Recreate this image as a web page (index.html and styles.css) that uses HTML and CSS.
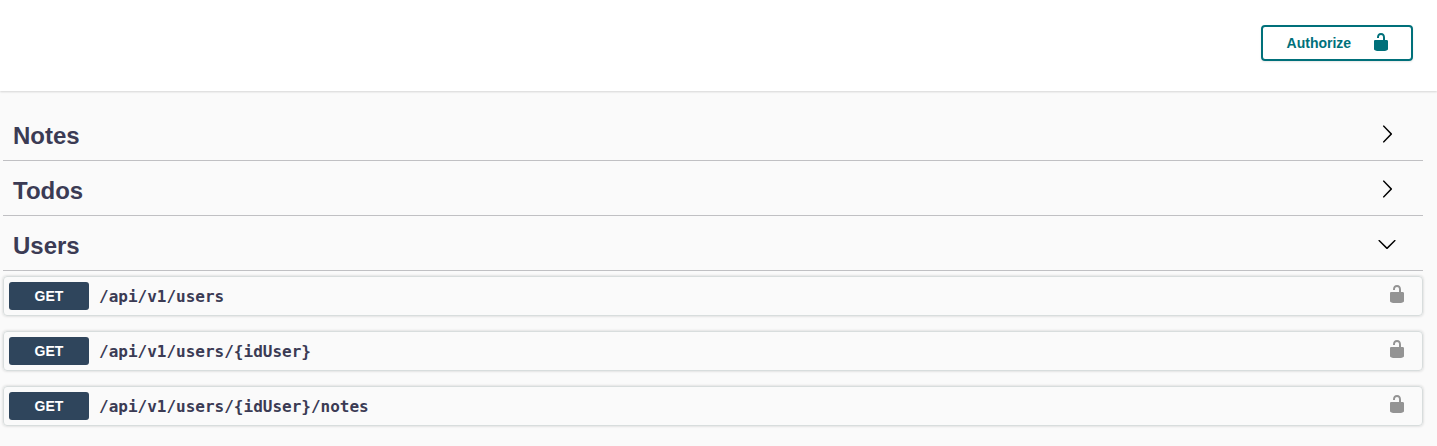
FILE: index.html
```
<!DOCTYPE html>
<html lang="en">
<head>
<meta charset="utf-8">
<title>API</title>
<link rel="stylesheet" href="styles.css">
</head>
<body>
<svg class="defs" xmlns="http://www.w3.org/2000/svg">
  <symbol id="unlocked" viewBox="0 0 20 20"><path d="M15.8 8H14V5.600C14 2.703 12.665 1 10 1 7.334 1 6 2.703 6 5.600V6h2v-.801C8 3.754 8.797 3 10 3c1.203 0 2 .754 2 2.199V8H4c-.553 0-1 .646-1 1.199V17c0 .549.428 1.139.951 1.307l1.197.387C5.672 18.861 6.550 19 7.100 19h5.800c.549 0 1.428-.139 1.951-.307l1.196-.387c.524-.167.953-.757.953-1.306V9.199C17 8.646 16.352 8 15.800 8z"/></symbol>
  <symbol id="arrow" viewBox="0 0 20 20"><path d="M13.250 10L6.109 2.580c-.268-.270-.268-.707 0-.979.268-.270.701-.270.969 0l7.830 7.908c.268.271.268.709 0 .979l-7.830 7.908c-.268.271-.701.270-.969 0-.268-.269-.268-.707 0-.979L13.250 10z"/></symbol>
  <symbol id="arrow-down" viewBox="0 0 20 20"><path d="M17.418 6.109c.272-.268.709-.268.979 0s.271.701 0 .969l-7.908 7.830c-.270.268-.707.268-.979 0l-7.908-7.830c-.270-.268-.270-.701 0-.969s.709-.268.979 0L10 13.250l7.418-7.141z"/></symbol>
</svg>
<header class="scheme">
  <button class="authorize"><span>Authorize</span><svg><use href="#unlocked"/></svg></button>
</header>
<main class="tags">
  <h3 class="tag"><span>Notes</span><svg><use href="#arrow"/></svg></h3>
  <h3 class="tag"><span>Todos</span><svg><use href="#arrow"/></svg></h3>
  <h3 class="tag"><span>Users</span><svg><use href="#arrow-down"/></svg></h3>
  <div class="operations">
    <div class="operation"><span class="method">GET</span><span class="path">/api/v1/users</span><svg><use href="#unlocked"/></svg></div>
    <div class="operation"><span class="method">GET</span><span class="path">/api/v1/users/{idUser}</span><svg><use href="#unlocked"/></svg></div>
    <div class="operation"><span class="method">GET</span><span class="path">/api/v1/users/{idUser}/notes</span><svg><use href="#unlocked"/></svg></div>
  </div>
</main>
</body>
</html>
```
FILE: styles.css
```
* { box-sizing: border-box; }
body { margin: 0; height: 446px; overflow: hidden; background: #fafafa; font-family: "Liberation Sans", Arial, sans-serif; color: #3b3b54; }
.defs { display: none; }
.scheme { display: flex; justify-content: flex-end; height: 91px; padding: 25px 24px 30px 0; background: #fff; box-shadow: 0 1px 2px rgba(0,0,0,.15); }
.authorize { display: flex; align-items: center; width: 152px; height: 36px; padding: 0 20px 0 23.6px; border: 2px solid #00707a; border-radius: 4px; background: transparent; color: #00707a; font: bold 14px "Liberation Sans", Arial, sans-serif; box-shadow: 0 1px 2px rgba(0,0,0,.1); }
.authorize span { flex: 1; text-align: left; }
.authorize svg { width: 20px; height: 20px; margin-bottom: 2px; fill: #00707a; }
.tags { padding: 15px 14px 0 3px; }
.tag { display: flex; align-items: center; justify-content: space-between; height: 55px; margin: 0; padding: 6px 26px 0 10px; border-bottom: 1px solid rgba(59,59,70,.3); font-size: 24px; }
.tag svg { width: 20px; height: 20px; margin-bottom: 4px; fill: #000; }
.operations { padding-top: 5px; }
.operation { display: flex; align-items: center; height: 40px; margin-bottom: 15px; padding: 0 15px 0 5px; border: 1px solid #d8dddd; border-radius: 4px; box-shadow: 0 0 3px rgba(0,0,0,.19); }
.method { width: 80px; height: 28px; border-radius: 3px; background: #2f455c; color: #fff; font-size: 14px; font-weight: 700; line-height: 28px; text-align: center; }
.path { flex: 1; padding-left: 10px; font: bold 16px "DejaVu Sans Mono", monospace; }
.operation svg { width: 20px; height: 20px; margin-bottom: 4px; fill: #949494; }
```
